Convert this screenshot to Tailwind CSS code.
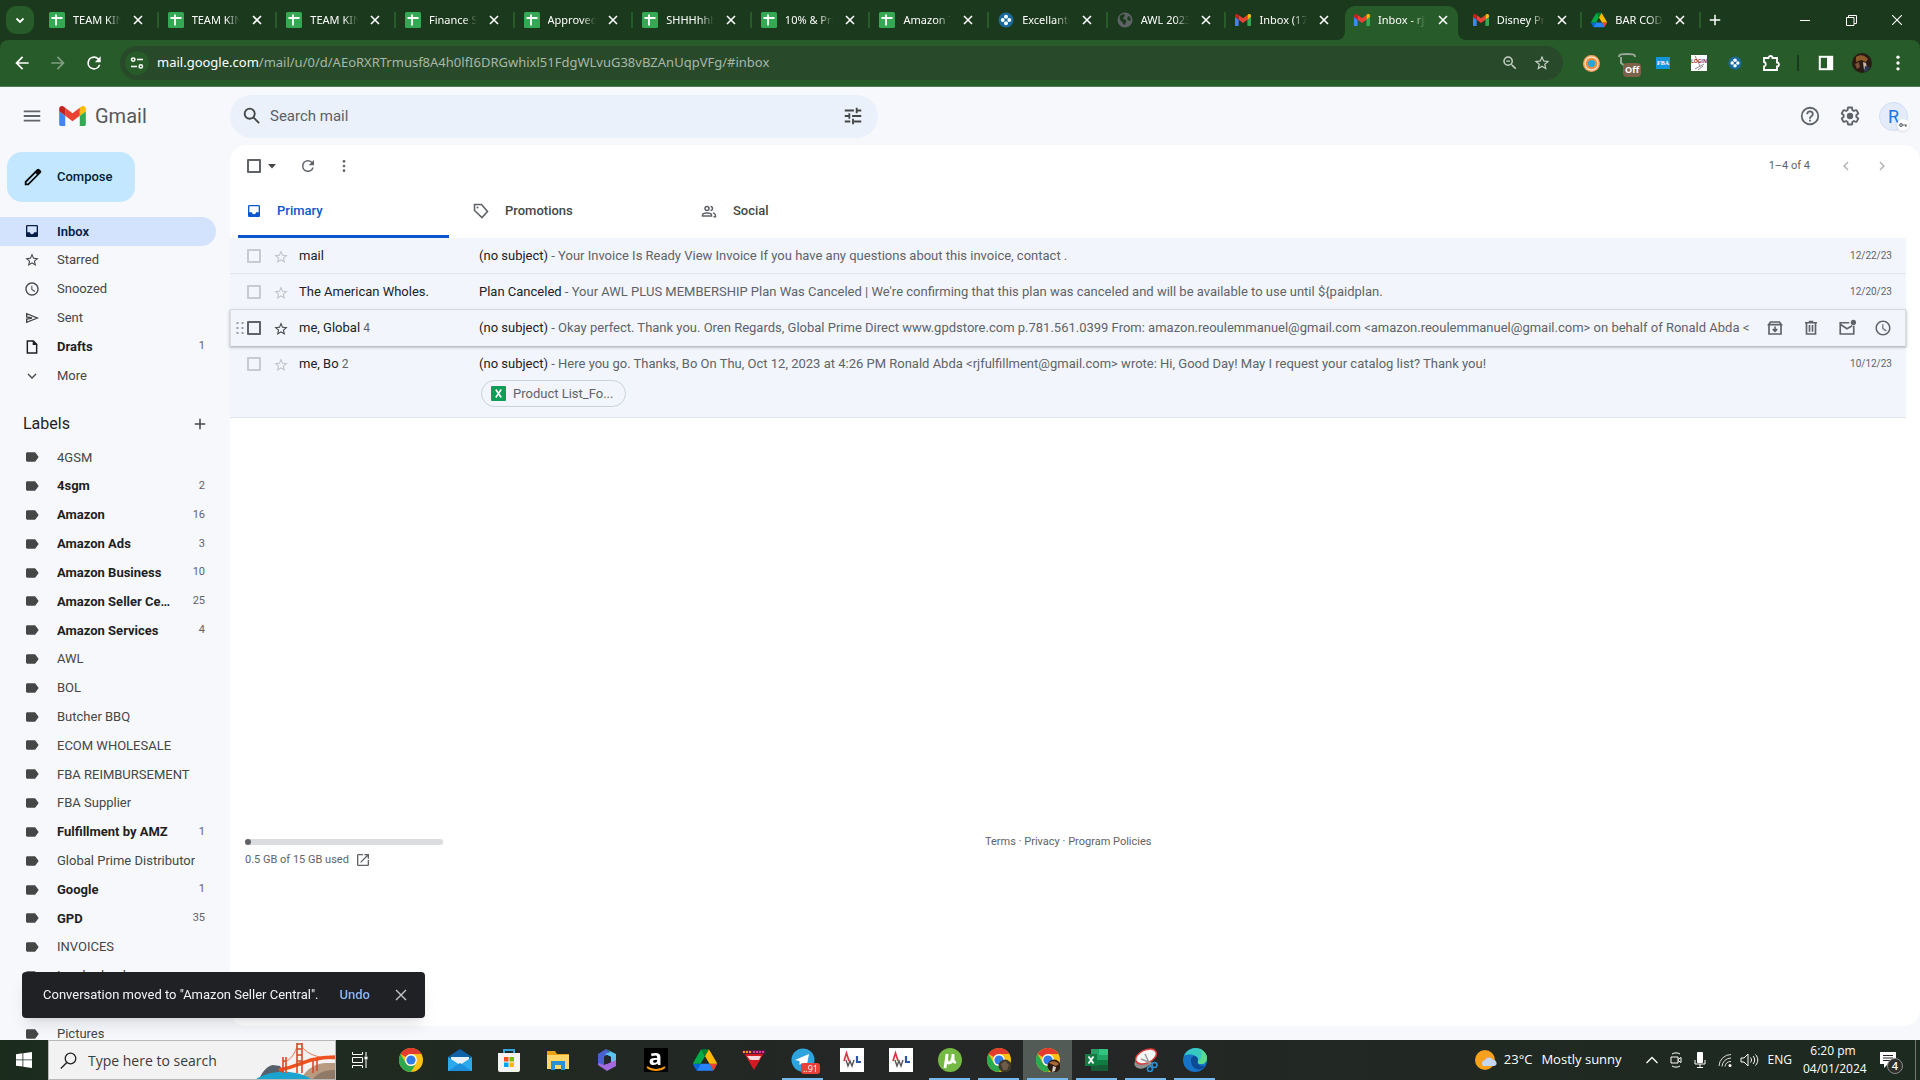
<!DOCTYPE html>
<html lang="en">
<head>
    <meta charset="UTF-8" />
    <meta name="viewport" content="width=device-width, initial-scale=1" />
    <title>Inbox - Gmail</title>
    <script src="https://cdn.jsdelivr.net/npm/@tailwindcss/browser@4"></script>
</head>
<body class="flex h-screen flex-col overflow-hidden bg-[#f6f8fc] font-['Open_Sans',sans-serif]">
    <!-- Icons used more than once -->
    <svg class="hidden">
        <symbol id="i-close" viewBox="0 0 12 12"><path d="M2 2l8 8M10 2l-8 8" stroke="currentColor" stroke-width="1.6" fill="none" /></symbol>
        <symbol id="i-sheets" viewBox="0 0 16 16"><rect width="16" height="16" rx="1.5" fill="#34a853" /><path d="M2.5 6h11M7 2.5v11" stroke="#fff" stroke-width="1.8" /></symbol>
        <symbol id="i-gmail" viewBox="52 42 88 66">
            <path fill="#4285f4" d="M58 108h14V74L52 59v43c0 3.32 2.69 6 6 6" />
            <path fill="#34a853" d="M120 108h14c3.32 0 6-2.69 6-6V59l-20 15" />
            <path fill="#fbbc04" d="M120 48v26l20-15v-8c0-7.42-8.47-11.65-14.4-7.2" />
            <path fill="#ea4335" d="M72 74V48l24 18 24-18v26L96 92" />
            <path fill="#c5221f" d="M52 51v8l20 15V48l-5.6-4.2c-5.94-4.45-14.4-.22-14.4 7.2" />
        </symbol>
        <symbol id="i-drive" viewBox="0 0 87.3 78">
            <path d="m6.6 66.85 3.85 6.65c.8 1.4 1.95 2.5 3.3 3.3l13.75-23.8h-27.5c0 1.55.4 3.1 1.2 4.5z" fill="#0066da" />
            <path d="m43.65 25-13.75-23.8c-1.35.8-2.5 1.9-3.3 3.3l-25.4 44a9.06 9.06 0 0 0-1.2 4.5h27.5z" fill="#00ac47" />
            <path d="m73.55 76.8c1.35-.8 2.5-1.9 3.3-3.3l1.6-2.75 7.65-13.25c.8-1.4 1.2-2.95 1.2-4.5h-27.5l5.85 11.5z" fill="#ea4335" />
            <path d="m43.65 25 13.75-23.8c-1.35-.8-2.9-1.2-4.5-1.2h-18.5c-1.6 0-3.15.45-4.5 1.2z" fill="#00832d" />
            <path d="m59.8 53h-32.3l-13.75 23.8c1.35.8 2.9 1.2 4.5 1.2h50.8c1.6 0 3.15-.45 4.5-1.2z" fill="#2684fc" />
            <path d="m73.4 26.5-12.7-22c-.8-1.4-1.95-2.5-3.3-3.3l-13.75 23.8 16.15 28h27.45c0-1.55-.4-3.1-1.2-4.5z" fill="#ffba00" />
        </symbol>
        <symbol id="i-clover" viewBox="0 0 16 16"><circle cx="8" cy="8" r="7.5" fill="#1b6a9c" /><g fill="#fff"><circle cx="8" cy="4.8" r="2" /><circle cx="8" cy="11.2" r="2" /><circle cx="4.8" cy="8" r="2" /><circle cx="11.2" cy="8" r="2" /></g><rect x="6.8" y="6.8" width="2.4" height="2.4" fill="#1b6a9c" /></symbol>
        <symbol id="i-globe" viewBox="0 0 16 16"><circle cx="8" cy="8" r="7.5" fill="#5f6368" /><path d="M3 4c2-2 4-2 5-1 0 2-2 2-2 4l3 1c1 2-1 3-1 5-2 0-2-3-4-4-1-1-2-3-1-5zM11 4l2 1 1 3-2 1-2-2z" fill="#1b3a1c" /></symbol>
        <symbol id="i-star" viewBox="0 0 24 24"><path fill="currentColor" d="M22 9.24l-7.19-.62L12 2 9.19 8.63 2 9.24l5.46 4.73L5.82 21 12 17.27 18.18 21l-1.63-7.03L22 9.24zM12 15.4l-3.76 2.27 1-4.28-3.32-2.88 4.38-.38L12 6.1l1.71 4.04 4.38.38-3.32 2.88 1 4.28L12 15.4z" /></symbol>
        <symbol id="i-inbox" viewBox="0 0 24 24"><path fill="currentColor" d="M19 3H5c-1.100 0-2 .9-2 2v14c0 1.100.9 2 2 2h14c1.100 0 2-.9 2-2V5c0-1.100-.9-2-2-2zm0 11h-4c0 1.660-1.350 3-3 3s-3-1.340-3-3H5V5h14v9z" /></symbol>
        <symbol id="i-clock" viewBox="0 0 24 24"><path fill="currentColor" d="M12 2C6.500 2 2 6.500 2 12s4.500 10 10 10 10-4.500 10-10S17.500 2 12 2zm0 18c-4.410 0-8-3.590-8-8s3.590-8 8-8 8 3.590 8 8-3.590 8-8 8zm.5-13H11v6l4.750 3.500 1-1.400-4.250-2.850V7z" /></symbol>
        <symbol id="i-label" viewBox="0 0 24 24"><path fill="currentColor" d="M17.630 5.840C17.270 5.330 16.670 5 16 5L5 5.010C3.900 5.010 3 5.900 3 7v10c0 1.100.9 1.990 2 1.990L16 19c.67 0 1.270-.33 1.630-.84L22 12l-4.370-6.160z" /></symbol>
        <symbol id="i-dots" viewBox="0 0 24 24"><g fill="currentColor"><circle cx="12" cy="5" r="2" /><circle cx="12" cy="12" r="2" /><circle cx="12" cy="19" r="2" /></g></symbol>
        <symbol id="i-reload" viewBox="0 0 24 24"><path fill="currentColor" d="M17.650 6.350A7.960 7.960 0 0 0 12 4a8 8 0 1 0 7.730 10h-2.080A6 6 0 1 1 12 6c1.660 0 3.140.69 4.220 1.780L13 11h7V4l-2.350 2.350z" /></symbol>
        <symbol id="i-plus" viewBox="0 0 24 24"><path fill="currentColor" d="M19 13h-6v6h-2v-6H5v-2h6V5h2v6h6v2z" /></symbol>
        <symbol id="i-chrome" viewBox="0 0 24 24"><circle cx="12" cy="12" r="12" fill="#fbc116" /><path d="M1.600 6A12 12 0 0 1 22.400 6H12a6 6 0 0 0-5.200 3z" fill="#e33b2e" /><path d="M1.600 6A12 12 0 0 0 12 24l5.200-9a6 6 0 0 1-10.400 0z" fill="#2da94f" /><circle cx="12" cy="12" r="5.900" fill="#fff" /><circle cx="12" cy="12" r="4.600" fill="#2f7de9" /></symbol>
        <symbol id="i-awl" viewBox="0 0 24 24"><rect width="24" height="24" fill="#fff" /><path d="M4 13l2.500-8L9 13" fill="none" stroke="#d9363e" stroke-width="1.700" /><path d="M6 12l2 6 2-5 2 5 2-6" fill="none" stroke="#555" stroke-width="1.400" /><path d="M17 8v6h4" fill="none" stroke="#2a56a5" stroke-width="2.200" /></symbol>
    </svg>

    <!-- Tab strip -->
    <header class="flex h-10 shrink-0 items-center bg-[#1b391c] pl-[6px] text-white">
        <button aria-label="Search tabs" class="flex size-7 shrink-0 items-center justify-center rounded-[10px] bg-[#275b29]">
            <svg class="size-3" viewBox="0 0 12 12"><path d="M2.500 4.500L6 8l3.500-3.500" stroke="#fff" stroke-width="1.800" fill="none" /></svg>
        </button>
        <div id="tabs" class="ml-[6px] flex h-full min-w-0 flex-1"></div>
        <button aria-label="New tab" class="flex size-7 items-center justify-center"><svg class="size-[18px]"><use href="#i-plus" /></svg></button>
        <div class="ml-[53px] flex h-full">
            <button aria-label="Minimize" class="flex w-[46px] items-center justify-center"><svg class="size-[10px]" viewBox="0 0 10 10"><path d="M0 5.500h10" stroke="#fff" /></svg></button>
            <button aria-label="Restore" class="flex w-[46px] items-center justify-center"><svg class="size-[11px]" viewBox="0 0 11 11"><path d="M.5 2.500h7.500v8H.5zM2.500 2.500v-2h8v8H8" stroke="#fff" fill="none" /></svg></button>
            <button aria-label="Close" class="flex w-[46px] items-center justify-center"><svg class="size-[10px]" viewBox="0 0 10 10"><path d="M0 0l10 10M10 0L0 10" stroke="#fff" stroke-width="1.100" /></svg></button>
        </div>
    </header>

    <!-- Address bar -->
    <div class="shrink-0 bg-[#1b391c]">
        <div class="flex h-[47px] items-center rounded-t-lg border-b border-[#527c54] bg-[#275b29] pr-3 pl-3 text-white">
            <button aria-label="Back" class="flex w-5 justify-center"><svg class="size-5" viewBox="0 0 24 24"><path fill="currentColor" d="M20 11H7.830l5.590-5.590L12 4l-8 8 8 8 1.410-1.410L7.830 13H20v-2z" /></svg></button>
            <button aria-label="Forward" class="ml-4 flex w-5 justify-center text-[#7f9f80]"><svg class="size-5" viewBox="0 0 24 24"><path fill="currentColor" d="M12 4l-1.410 1.410L16.170 11H4v2h12.170l-5.580 5.590L12 20l8-8-8-8z" /></svg></button>
            <button aria-label="Reload" class="ml-4 flex w-5 justify-center"><svg class="size-5"><use href="#i-reload" /></svg></button>
            <div class="relative ml-4 flex h-[34px] flex-1 items-center rounded-full bg-[#284a2a] pr-3 pl-[5px]">
                <button aria-label="Site information" class="flex size-6 items-center justify-center rounded-full bg-[#275b29]">
                    <svg class="size-[14px]" viewBox="0 0 14 14"><g fill="none" stroke="#fff" stroke-width="1.500"><circle cx="3.200" cy="3.600" r="1.700" /><path d="M7 3.600h6M1 10.400h6" /><circle cx="10.800" cy="10.400" r="1.700" /></g></svg>
                </button>
                <a href="#inbox" class="ml-2 flex-1 truncate font-['Noto_Sans',sans-serif] text-[13px] text-[#a9b7a9]"><span class="text-white">mail.google.com</span>/mail/u/0/d/AEoRXRTrmusf8A4h0lfI6DRGwhixl51FdgWLvuG38vBZAnUqpVFg/#inbox</a>
                <button aria-label="Zoom" class="text-[#c3cfc3]"><svg class="size-[18px]" viewBox="0 0 24 24"><path fill="currentColor" d="M15.500 14h-.79l-.28-.27A6.470 6.470 0 0 0 16 9.500 6.500 6.500 0 1 0 9.500 16c1.610 0 3.090-.59 4.230-1.570l.27.28v.79l5 4.990L20.490 19l-4.990-5zm-6 0C7.010 14 5 11.990 5 9.500S7.010 5 9.500 5 14 7.010 14 9.500 11.990 14 9.500 14zM7 8.700h5v1.500H7z" /></svg></button>
                <button aria-label="Bookmark" class="ml-[14px] text-[#c3cfc3]"><svg class="size-[18px]"><use href="#i-star" /></svg></button>
            </div>
            <div class="ml-[18px] flex items-center">
                <button aria-label="Extension" class="flex w-5 justify-center"><svg class="size-[17px]" viewBox="0 0 16 16"><circle cx="8" cy="8" r="8" fill="#f4a261" /><circle cx="8" cy="8" r="6" fill="none" stroke="#fff0dc" stroke-width="1" /><circle cx="8" cy="8" r="5.400" fill="#f08c3c" /><circle cx="8" cy="8" r="3.300" fill="#20a8e0" /></svg></button>
                <button class="relative ml-4 flex h-6 w-5 justify-center"><svg class="size-[18px]" viewBox="0 0 18 18"><path d="M1 6c0-3 3-3 8-3s8 0 8 3M3 6v6l4 3" stroke="#9aa89a" stroke-width="2" fill="none" /></svg><span class="absolute top-3 left-[6px] rounded-[4px] bg-[#7d6148] px-[2px] text-[9px] leading-[14px] font-bold">Off</span></button>
                <button class="ml-4 flex w-5 justify-center"><span class="bg-[#1296db] px-[1px] font-['Liberation_Serif',serif] text-[6px] leading-[12px] font-bold">FBA</span></button>
                <button class="ml-4 flex w-5 justify-center"><span class="relative flex size-4 justify-center overflow-hidden bg-white"><svg class="absolute size-4" viewBox="0 0 16 16"><path d="M4 1l5 10M4 14l9-5M7 15l5-4" stroke="#8b8b8b" fill="none" /></svg><span class="relative text-[5px] leading-[13px] font-bold text-[#a03030]">LOGIN</span></span></button>
                <button aria-label="Clover" class="ml-4 flex w-5 justify-center"><svg class="size-[14px]"><use href="#i-clover" /></svg></button>
                <button aria-label="Extensions" class="ml-4 flex w-5 justify-center"><svg class="size-[18px]" viewBox="0 0 18 18"><path d="M2 4h4.500a2 2 0 0 1 4 0H15v4.500a2 2 0 0 1 0 4V16H2v-3.500a2.300 2.300 0 0 0 0-4.500z" fill="none" stroke="#fff" stroke-width="1.800" /></svg></button>
                <span class="ml-4 h-4 w-[2px] bg-[#1b391c]"></span>
                <button aria-label="Side panel" class="ml-[17px] flex w-5 justify-center"><svg class="size-4" viewBox="0 0 16 16"><rect x="1.800" y="1.800" width="12.400" height="12.400" fill="none" stroke="#fff" stroke-width="2" /><path d="M9 1h6v14H9z" fill="#fff" /></svg></button>
                <button aria-label="Profile" class="ml-4 flex w-5 justify-center"><svg class="size-5" viewBox="0 0 20 20"><circle cx="10" cy="10" r="10" fill="#2a1c14" /><path d="M4 4c4-3 9-2 12 2l-2 3-5-2-5 2z" fill="#8b5a2b" /><path d="M3 11l4-2 1 5-3 2z" fill="#7a5138" /><path d="M11 9l3 1 1 5-3 2z" fill="#c9b8ae" /><path d="M13 13l5 1-3 4-3 1z" fill="#2b3a57" /></svg></button>
                <button aria-label="Menu" class="ml-4 flex w-5 justify-center"><svg class="size-5"><use href="#i-dots" /></svg></button>
            </div>
        </div>
    </div>

    <!-- Gmail -->
    <div class="flex min-h-0 flex-1 flex-col font-[Roboto,sans-serif] text-[13px] text-[#444746]">
        <div class="flex h-[58px] shrink-0 items-center pr-3">
            <div class="flex w-[230px] shrink-0 items-center">
                <button aria-label="Main menu" class="ml-[21px]"><svg class="size-[22px]" viewBox="0 0 24 24"><path fill="#5f6368" d="M3 18h18v-2H3v2zm0-5h18v-2H3v2zm0-7v2h18V6H3z" /></svg></button>
                <a href="#inbox" class="ml-4 flex items-center"><svg class="h-5 w-[27px]"><use href="#i-gmail" /></svg><span class="ml-[9px] text-[20px] text-[#55595d]">Gmail</span></a>
            </div>
            <form class="flex h-[43px] w-[648px] items-center rounded-full bg-[#eaf1fb] pr-[14px] pl-[11px]">
                <button type="button" aria-label="Search" class="flex"><svg class="size-[22px]" viewBox="0 0 24 24"><path fill="#444746" d="M20.490 19l-5.730-5.730C15.530 12.200 16 10.910 16 9.500A6.500 6.500 0 1 0 9.500 16c1.410 0 2.700-.47 3.770-1.240L19 20.490 20.490 19zM5 9.500C5 7.010 7.010 5 9.500 5S14 7.010 14 9.500 11.990 14 9.500 14 5 11.990 5 9.500z" /></svg></button>
                <input type="text" aria-label="Search mail" placeholder="Search mail" class="ml-[7px] flex-1 bg-transparent text-[15px] placeholder-[#5c6066] outline-none" />
                <button type="button" aria-label="Search options" class="flex"><svg class="size-[22px]" viewBox="0 0 24 24"><path fill="#444746" d="M3 17v2h6v-2H3zM3 5v2h10V5H3zm10 16v-2h8v-2h-8v-2h-2v6h2zM7 9v2H3v2h4v2h2V9H7zm14 4v-2H11v2h10zm-6-4h2V7h4V5h-4V3h-2v6z" /></svg></button>
            </form>
            <div class="ml-auto flex items-center text-[#5f6368]">
                <button aria-label="Support"><svg class="size-[22px]" viewBox="0 0 24 24"><path fill="currentColor" d="M11 18h2v-2h-2v2zm1-16a10 10 0 1 0 0 20 10 10 0 0 0 0-20zm0 18c-4.410 0-8-3.590-8-8s3.590-8 8-8 8 3.590 8 8-3.590 8-8 8zm0-14a4 4 0 0 0-4 4h2c0-1.100.9-2 2-2s2 .9 2 2c0 2-3 1.750-3 5h2c0-2.250 3-2.500 3-5a4 4 0 0 0-4-4z" /></svg></button>
                <button aria-label="Settings" class="ml-[18px]"><svg class="size-[22px]" viewBox="0 0 24 24"><path fill="currentColor" d="M13.850 22.250h-3.700c-.74 0-1.360-.54-1.450-1.270l-.27-1.890c-.27-.14-.53-.29-.79-.46l-1.800.72c-.7.26-1.470-.03-1.810-.65L2.200 15.530c-.35-.66-.2-1.440.36-1.880l1.530-1.190c-.01-.15-.02-.3-.02-.46 0-.15.01-.31.02-.46l-1.520-1.190c-.59-.45-.74-1.260-.37-1.880l1.850-3.190c.34-.62 1.110-.9 1.790-.63l1.810.73c.26-.17.52-.32.78-.46l.27-1.910c.09-.7.71-1.250 1.440-1.250h3.700c.74 0 1.360.54 1.450 1.270l.27 1.890c.27.14.53.29.79.46l1.800-.72c.71-.26 1.480.03 1.820.65l1.840 3.180c.36.66.2 1.440-.36 1.880l-1.520 1.190c.01.15.02.3.02.46s-.01.31-.02.46l1.520 1.190c.56.45.72 1.230.37 1.860l-1.860 3.220c-.34.62-1.110.9-1.800.63l-1.800-.72c-.26.17-.52.32-.78.46l-.27 1.910c-.1.680-.72 1.220-1.460 1.220zm-3.230-2h2.760l.37-2.550.53-.22c.44-.18.88-.44 1.340-.78l.45-.34 2.380.96 1.380-2.400-2.030-1.580.07-.56c.03-.26.06-.51.06-.78s-.03-.53-.06-.78l-.07-.56 2.030-1.580-1.390-2.400-2.390.96-.45-.35c-.42-.32-.87-.58-1.330-.77l-.52-.22-.37-2.550h-2.760l-.37 2.550-.53.210c-.44.19-.88.44-1.340.79l-.45.33-2.380-.95-1.390 2.390 2.030 1.580-.07.56a7 7 0 0 0-.06.79c0 .26.02.53.06.78l.07.56-2.030 1.580 1.380 2.400 2.390-.96.45.35c.43.33.86.58 1.330.77l.53.22.38 2.550z" /><circle cx="12" cy="12" r="3.500" fill="currentColor" /></svg></button>
                <button class="relative ml-[18px] flex size-[29px] items-center justify-center rounded-full border border-[#d3dff5] bg-[#e4ecfb] text-[18px] text-[#1a73e8]">R<span class="absolute -right-[2px] -bottom-[1px] flex size-3 items-center justify-center rounded-full bg-white shadow"><svg class="h-[6px] w-2" viewBox="0 0 10 6"><circle cx="2.500" cy="3" r="1.700" stroke="#5f6368" stroke-width="1.400" fill="none" /><path d="M4.500 3H10M8.500 3v2.500" stroke="#5f6368" stroke-width="1.400" /></svg></span></button>
            </div>
        </div>

        <div class="flex min-h-0 flex-1">
            <!-- Sidebar -->
            <aside class="w-[230px] shrink-0 overflow-hidden">
                <button class="mt-[7px] ml-[7px] flex h-[50px] w-32 items-center rounded-[15px] bg-[#c2e7ff] pl-[15px] text-[#001d35]">
                    <svg class="size-[22px]" viewBox="0 0 24 24"><path fill="#0b0b0b" d="M20.410 4.940l-1.350-1.350c-.78-.78-2.050-.78-2.830 0L3 16.820V21h4.180L20.410 7.770c.79-.78.79-2.050 0-2.830zm-14 14.120L5 19v-1.360l9.820-9.820 1.410 1.410-9.820 9.830z" /></svg>
                    <span class="ml-[13px] font-medium">Compose</span>
                </button>
                <nav id="folders" class="mt-[15px] grid h-[173px] auto-rows-fr"></nav>
                <div class="mt-[23px] flex h-[22px] items-center pr-[21px] pl-[23px] text-[16px] text-[#1f1f1f]">
                    <h2 class="flex-1">Labels</h2>
                    <button aria-label="Create new label" class="text-[#444746]"><svg class="size-[18px]"><use href="#i-plus" /></svg></button>
                </div>
                <nav id="labels" class="mt-2 grid h-[605px] auto-rows-fr"></nav>
            </aside>

            <!-- Mail list -->
            <main class="mb-[14px] flex min-w-0 flex-1 flex-col rounded-2xl bg-white">
                <div class="flex h-[42px] shrink-0 items-center pr-[29px] pl-[17px] text-[#5f6368]">
                    <input type="checkbox" aria-label="Select all" class="size-[14px] appearance-none rounded-[1px] border-2 border-[#5f6368]" />
                    <button aria-label="Select" class="ml-[7px]"><svg class="h-[5px] w-2" viewBox="0 0 8 5"><path d="M0 0h8L4 4.500z" fill="#444746" /></svg></button>
                    <button aria-label="Refresh" class="ml-[23px]"><svg class="size-[18px]"><use href="#i-reload" /></svg></button>
                    <button aria-label="More" class="ml-[19px]"><svg class="size-[16px]"><use href="#i-dots" /></svg></button>
                    <span class="ml-auto text-[11px]">1–4 of 4</span>
                    <button aria-label="Newer" class="ml-[27px] text-[#b4b6b9]"><svg class="size-[18px]" viewBox="0 0 24 24"><path fill="currentColor" d="M15.410 7.410L14 6l-6 6 6 6 1.410-1.410L10.830 12z" /></svg></button>
                    <button aria-label="Older" class="ml-[18px] text-[#b4b6b9]"><svg class="size-[18px]" viewBox="0 0 24 24"><path fill="currentColor" d="M8.590 16.590L10 18l6-6-6-6-1.410 1.410L13.170 12z" /></svg></button>
                </div>
                <div class="flex h-[51px] shrink-0 pl-2 font-medium">
                    <button class="mr-4 flex w-[211px] items-center border-b-[3px] border-[#0b57d0] pl-2 text-[#0b57d0]"><svg class="size-4"><use href="#i-inbox" /></svg><span class="ml-[15px]">Primary</span></button>
                    <button class="flex w-[228px] items-center border-b-[3px] border-transparent pl-2"><svg class="size-4" viewBox="0 0 16 16"><path d="M1.500 1.500h7l6 7-5.500 6-7.500-7z" fill="none" stroke="#5f6368" stroke-width="1.600" /><circle cx="4.500" cy="4.500" r="1" fill="#5f6368" /></svg><span class="ml-4">Promotions</span></button>
                    <button class="flex w-[228px] items-center border-b-[3px] border-transparent pl-2"><svg class="size-4" viewBox="0 0 16 16"><g fill="none" stroke="#5f6368" stroke-width="1.500"><circle cx="6" cy="5.500" r="2" /><path d="M1.500 13v-1c0-1.500 2.500-2 4.500-2s4.500.5 4.500 2v1zM9.500 3.500a2 2 0 0 1 0 4M12 10c2 .5 2.500 1 2.500 3.700h-2" /></g></svg><span class="ml-4">Social</span></button>
                </div>
                <div class="pr-[14px]">
                    <table class="w-full table-fixed border-collapse">
                        <colgroup><col class="w-[43px]" /><col class="w-[26px]" /><col class="w-[180px]" /><col /><col class="w-[158px]" /></colgroup>
                        <tbody id="mail"></tbody>
                    </table>
                </div>
                <footer class="mt-[420px] flex items-start pl-[15px] text-[11px] leading-4 text-[#5f6368]">
                    <div class="w-[740px]">
                        <div class="mt-[1px] h-[6px] w-[198px] rounded-full bg-[#dadce0]"><div class="size-[6px] rounded-full bg-[#5f6368]"></div></div>
                        <div class="mt-[7px] flex items-center"><span>0.5 GB of 15 GB used</span><a href="#storage" aria-label="Manage storage" class="ml-[6px]"><svg class="size-4" viewBox="0 0 24 24"><path fill="currentColor" d="M19 19H5V5h7V3H5a2 2 0 0 0-2 2v14a2 2 0 0 0 2 2h14c1.100 0 2-.9 2-2v-7h-2v7zM14 3v2h3.590l-9.830 9.830 1.410 1.410L19 6.410V10h2V3h-7z" /></svg></a></div>
                    </div>
                    <p class="-mt-1"><a href="#terms">Terms</a> · <a href="#privacy">Privacy</a> · <a href="#policies">Program Policies</a></p>
                </footer>
            </main>
        </div>
    </div>

    <!-- Snackbar -->
    <div role="status" class="fixed bottom-[62px] left-[22px] flex h-[46px] items-center rounded-[4px] bg-[#202124] pr-[17px] pl-[21px] font-[Roboto,sans-serif] text-[13px] text-[#f1f3f4] shadow-lg">
        <span>Conversation moved to "Amazon Seller Central".</span>
        <button class="ml-[21px] font-medium text-[#8ab4f8]">Undo</button>
        <button aria-label="Dismiss" class="ml-[24px] text-[#c4c7c5]"><svg class="size-[14px]" viewBox="0 0 14 14"><path d="M2 2l10 10M12 2L2 12" stroke="currentColor" stroke-width="1.400" /></svg></button>
    </div>

    <!-- Taskbar -->
    <footer class="flex h-10 shrink-0 items-stretch bg-linear-to-r from-[#1b2c1d] via-[#252626] to-[#1c2a20] text-white">
        <button aria-label="Start" class="flex w-12 items-center justify-center"><svg class="size-4" viewBox="0 0 16 16"><path fill="#fff" d="M0 2.200l6.500-.9v6.200H0zM7.300 1.200L16 0v7.500H7.300zM0 8.300h6.500v6.300L0 13.700zM7.300 8.300H16V16l-8.700-1.200z" /></svg></button>
        <label class="relative flex w-72 items-center border border-[#b8b8b8] bg-[#f2f2f2] pl-[11px]">
            <svg class="size-[17px]" viewBox="0 0 17 17"><circle cx="10.500" cy="6.500" r="5.300" fill="none" stroke="#222" stroke-width="1.300" /><path d="M6.800 10.500L.8 16.500" stroke="#222" stroke-width="1.400" /></svg>
            <input type="text" aria-label="Search Windows" placeholder="Type here to search" class="ml-[11px] w-40 bg-transparent text-[14px] placeholder-[#3b3b3b] outline-none" />
            <svg class="absolute right-0 bottom-0 h-[38px] w-20" viewBox="0 0 80 38">
                <path d="M4 38c4-8 8-13 14-14l7 1 6 9 4 4z" fill="#56606e" />
                <path d="M8 38c4-5 10-6 16-4l5 4z" fill="#8e8473" />
                <path d="M46 38c5-10 14-15 24-16h10v16z" fill="#b79a80" /><path d="M58 38c6-7 12-9 22-9v9z" fill="#8f7967" />
                <path d="M1 38c10-6 22-8 33-7 10 1 18 4 22 7z" fill="#1ba4cf" />
                <path d="M24 29c16-3 22-7 32-10 8-2 16-3 24-3" stroke="#f0501c" stroke-width="3.500" fill="none" />
                <path d="M42 32V2M47 32V2M42 3h5M42 8h5M42 14h5M42 20h5M28 32V16M31 32V16M28 20h3M58 32V20M62 30V19" stroke="#d9482a" stroke-width="1.600" fill="none" />
                <path d="M46 3c3 9 15 14 34 15M43 3c-3 9-7 17-15 18" stroke="#e2572b" stroke-width=".8" fill="none" />
            </svg>
        </label>
        <button aria-label="Task view" class="flex w-[50px] items-center justify-center pr-[2px]"><svg class="size-4" viewBox="0 0 16 16"><path d="M.5 0v2.500h10V0M.5 5.500h10v5H.5zM.5 16v-2.500h10V16M14 0v4M14 8v8" stroke="#fff" fill="none" /><path d="M12.500 4.500h3v3h-3z" fill="#fff" /></svg></button>
        <div id="apps" class="flex"></div>
        <div class="ml-auto flex items-center">
            <button class="flex items-center text-[14px]"><svg class="h-[22px] w-6" viewBox="0 0 24 22"><circle cx="11" cy="11" r="10" fill="#f5a01f" /><path d="M9 17a3.500 3.500 0 0 1 2-6 4.500 4.500 0 0 1 8 0 3 3 0 0 1 1 6z" fill="#c3d6f5" /></svg><span class="ml-[6px] text-[13px]">23°C</span><span class="ml-[9px] text-[13px]">Mostly sunny</span></button>
            <button aria-label="Hidden icons" class="ml-6"><svg class="size-3" viewBox="0 0 12 12"><path d="M.5 9L6 3.500 11.500 9" stroke="#fff" stroke-width="1.300" fill="none" /></svg></button>
            <button aria-label="Meet now" class="ml-3"><svg class="h-4 w-3" viewBox="0 0 12 16"><path d="M1 5h7v6H1zM8 7.500l3-2v5l-3-2M2 2c2-1.500 6-1.500 8 0M2 14c2 1.500 6 1.500 8 0" stroke="#fff" fill="none" /></svg></button>
            <button aria-label="Microphone" class="ml-3"><svg class="h-4 w-3" viewBox="0 0 12 16"><rect x="3" width="6" height="11" rx="1" fill="#fff" /><path d="M1 8v4h10V8M6 12v4M3 15.500h6" stroke="#fff" fill="none" /></svg></button>
            <button aria-label="Network" class="ml-3"><svg class="size-[14px]" viewBox="0 0 14 14"><g stroke="#ddd" fill="none"><path d="M1 13A12 12 0 0 1 13 1.500M4 13.500A9 9 0 0 1 13 5M7 13.500a6 6 0 0 1 6-5" /></g><circle cx="12" cy="12.500" r="1.500" fill="#fff" /></svg></button>
            <button aria-label="Volume" class="ml-2"><svg class="h-4 w-5" viewBox="0 0 20 16"><path d="M1 6h3l4-4v12l-4-4H1zM10.500 5.500c1.300 1.500 1.300 3.500 0 5M13 4c2.200 2.500 2.200 5.500 0 8M15.500 2.500c3 3.500 3 7.500 0 11" stroke="#fff" fill="none" /></svg></button>
            <span class="ml-2 text-[12px]">ENG</span>
            <time class="ml-[11px] w-[60px] text-center text-[12px] leading-[18px]">6:20 pm<br />04/01/2024</time>
            <button class="relative ml-[17px] w-[24px]"><svg class="h-4 w-4" viewBox="0 0 16 16"><path d="M0 0h16v12H8l-4 4v-4H0z" fill="#fff" /><path d="M3 3.500h10M3 6h10M3 8.500h7" stroke="#222" /></svg><span class="absolute right-[1px] -bottom-[6px] flex size-4 items-center justify-center rounded-full border border-[#8a8a8a] bg-[#2c302d] text-[11px] font-semibold">4</span></button>
            <span class="ml-[11px] h-10 border-l border-[#777] pl-1"></span>
        </div>
    </footer>

    <script>
        const tabs = [
            ['i-sheets', 'TEAM KING'], ['i-sheets', 'TEAM KING'], ['i-sheets', 'TEAM KING'], ['i-sheets', 'Finance S'],
            ['i-sheets', 'Approved'], ['i-sheets', 'SHHHhhhh'], ['i-sheets', '10% & Pro'], ['i-sheets', 'Amazon T'],
            ['i-clover', 'Excellante'], ['i-globe', 'AWL 2023'], ['i-gmail', 'Inbox (17)'], ['i-gmail', 'Inbox - rjf'],
            ['i-gmail', 'Disney Pri'], ['i-drive', 'BAR CODE']
        ];
        const active = 11;
        document.getElementById('tabs').innerHTML = tabs.map(([icon, title], i) => `
            <div class="relative flex min-w-0 flex-1 items-center">
                ${i === active ? '<span class="absolute top-[6px] right-[6px] -bottom-px left-0 rounded-t-[10px] bg-[#275b29]"></span><span class="absolute bottom-0 -left-2 size-2 overflow-hidden bg-[#275b29]"><span class="block size-2 rounded-br-lg bg-[#1b391c]"></span></span><span class="absolute right-[-2px] bottom-0 size-2 bg-[#275b29]"><span class="block size-2 rounded-bl-lg bg-[#1b391c]"></span></span>' : ''}
                <svg class="relative ml-[9px] size-4 shrink-0"><use href="#${icon}" /></svg>
                <button class="relative ml-2 w-12 shrink-0 overflow-hidden mask-r-from-70% text-left font-['Noto_Sans',sans-serif] text-[11px] whitespace-nowrap">${title}</button>
                <button aria-label="Close tab" class="relative ml-[11px]"><svg class="size-3"><use href="#i-close" /></svg></button>
                ${i === active || i === active - 1 ? '' : '<span class="absolute top-3 right-0 h-4 w-[2px] bg-[#275b29]"></span>'}
            </div>`).join('');

        const folderIcons = {
            Inbox: '<use href="#i-inbox" />',
            Starred: '<use href="#i-star" />',
            Snoozed: '<use href="#i-clock" />',
            Sent: '<path fill="none" stroke="currentColor" stroke-width="2" d="M4 5.500v5L12 12l-8 1.500v5L20 12z" />',
            Drafts: '<path fill="none" stroke="currentColor" stroke-width="2.200" d="M5 3h9l5 5v13H5z" /><path fill="currentColor" d="M13 2l7 7h-7z" />',
            More: '<path fill="none" stroke="currentColor" stroke-width="2" d="M6 9l6 6 6-6" />'
        };
        const folders = [['Inbox', ''], ['Starred', ''], ['Snoozed', ''], ['Sent', ''], ['Drafts', '1'], ['More', '']];
        document.getElementById('folders').innerHTML = folders.map(([name, count]) => `
            <a href="#${name.toLowerCase()}" class="mr-[14px] flex items-center rounded-r-full pr-[11px] pl-6 ${name === 'Inbox' ? 'bg-[#d3e3fd] font-semibold text-[#041e49]' : ''} ${count ? 'font-bold text-[#1f1f1f]' : ''}">
                <svg class="size-4" viewBox="0 0 24 24">${folderIcons[name]}</svg>
                <span class="ml-[17px] flex-1">${name}</span>
                <span class="text-[11px] font-normal text-[#5f6368]">${count}</span>
            </a>`).join('');

        const labels = [
            ['4GSM'], ['4sgm', 2], ['Amazon', 16], ['Amazon Ads', 3], ['Amazon Business', 10], ['Amazon Seller Central', 25],
            ['Amazon Services', 4], ['AWL'], ['BOL'], ['Butcher BBQ'], ['ECOM WHOLESALE'], ['FBA REIMBURSEMENT'], ['FBA Supplier'],
            ['Fulfillment by AMZ', 1], ['Global Prime Distributor'], ['Google', 1], ['GPD', 35], ['INVOICES'], ['Lamberland'],
            [''], ['Pictures']
        ];
        document.getElementById('labels').innerHTML = labels.map(([name, count]) => `
            <a href="#label" class="mr-[14px] flex items-center pr-[11px] pl-6 ${count ? 'font-bold text-[#1f1f1f]' : ''}">
                <svg class="size-4 shrink-0 text-[#444746]"><use href="#i-label" /></svg>
                <span class="ml-[17px] truncate ${count ? 'w-[118px]' : ''}">${name}</span>
                <span class="ml-auto text-[11px] font-normal text-[#5f6368]">${count || ''}</span>
            </a>`).join('');

        const mail = [
            { from: 'mail', subject: '(no subject)', text: 'Your Invoice Is Ready View Invoice If you have any questions about this invoice, contact .', date: '12/22/23' },
            { from: 'The American Wholes.', subject: 'Plan Canceled', text: "Your AWL PLUS MEMBERSHIP Plan Was Canceled | We're confirming that this plan was canceled and will be available to use until ${paidplan.", date: '12/20/23' },
            { from: 'me, Global', n: 4, hover: true, subject: '(no subject)', text: 'Okay perfect. Thank you. Oren Regards, Global Prime Direct www.gpdstore.com p.781.561.0399 From: amazon.reoulemmanuel@gmail.com &lt;amazon.reoulemmanuel@gmail.com&gt; on behalf of Ronald Abda &lt;' },
            { from: 'me, Bo', n: 2, subject: '(no subject)', text: 'Here you go. Thanks, Bo On Thu, Oct 12, 2023 at 4:26 PM Ronald Abda &lt;rjfulfillment@gmail.com&gt; wrote: Hi, Good Day! May I request your catalog list? Thank you!', date: '10/12/23', file: 'Product List_Fo...' }
        ];
        const actions = `
            <div class="flex items-center justify-end gap-[18px] pr-[14px] text-[#5f6368]">
                <button aria-label="Archive"><svg class="size-[18px]" viewBox="0 0 24 24"><path fill="none" stroke="currentColor" stroke-width="2.200" d="M4 7v13h16V7M3.500 7.500h17L18 4H6zM12 10v6M9 13.500l3 3 3-3" /></svg></button>
                <button aria-label="Delete"><svg class="size-[18px]" viewBox="0 0 24 24"><path fill="none" stroke="currentColor" stroke-width="2.200" d="M4 5h16M9 3.500h6M6 5v15h12V5M10 8v9M14 8v9" /></svg></button>
                <button aria-label="Mark as unread"><svg class="size-[18px]" viewBox="0 0 24 24"><path fill="none" stroke="currentColor" stroke-width="2.200" d="M15 5H3v15h18V9M3 7l9 6 7-4" /><circle cx="20.500" cy="4.500" r="3.500" fill="currentColor" /></svg></button>
                <button aria-label="Snooze"><svg class="size-[18px]"><use href="#i-clock" /></svg></button>
            </div>`;
        document.getElementById('mail').innerHTML = mail.map((m) => `
            <tr class="bg-[#f2f6fc] align-top ${m.file ? 'h-[72px]' : 'h-9'} ${m.hover ? 'relative z-10 shadow-[inset_1px_0_0_#dadce0,inset_-1px_0_0_#dadce0,0_1px_2px_0_rgba(60,64,67,0.3),0_1px_3px_1px_rgba(60,64,67,0.15)]' : 'shadow-[inset_0_-1px_0_#e1e5ec]'}">
                <td class="relative pt-[11px] pl-[17px]">
                    ${m.hover ? '<svg class="absolute top-3 left-[6px] h-3 w-2" viewBox="0 0 8 12"><path d="M1.500 0v12M6.500 0v12" stroke="#9a9da1" stroke-width="2" stroke-dasharray="2 3" /></svg>' : ''}
                    <input type="checkbox" aria-label="Select conversation" class="block size-[14px] appearance-none rounded-[1px] border-2 ${m.hover ? 'border-[#5f6368]' : 'border-[#c7cacf]'}" />
                </td>
                <td class="pt-[11px]"><button aria-label="Star" class="block ${m.hover ? 'text-[#444746]' : 'text-[#c1c4c8]'}"><svg class="size-4"><use href="#i-star" /></svg></button></td>
                <td class="truncate pt-2 leading-5 text-[#202124]">${m.from}${m.n ? ` <span class="text-[12px] text-[#5f6368]">${m.n}</span>` : ''}</td>
                <td class="pt-2 leading-5 whitespace-nowrap text-[#5f6368]">
                    <div><span class="text-[#202124]">${m.subject}</span> - ${m.text}</div>
                    ${m.file ? `<a href="#file" class="mt-[6px] ml-[2px] inline-flex h-[27px] items-center rounded-full border border-[#c9d1dc] pr-3 pl-[9px]"><svg class="size-[15px]" viewBox="0 0 15 15"><rect width="15" height="15" rx="1" fill="#0f9d58" /><path d="M4.800 3.500l5.400 8M10.200 3.500l-5.400 8" stroke="#fff" stroke-width="1.600" /></svg><span class="ml-[7px]">${m.file}</span></a>` : ''}
                </td>
                <td class="${m.hover ? 'pt-[9px]' : 'pt-2 pr-[14px] text-right text-[10px] leading-5 text-[#5f6368]'}">${m.hover ? actions : m.date}</td>
            </tr>`).join('');

        // Windows taskbar apps
        const apps = [
            { svg: '<use href="#i-chrome" />' },
            { svg: '<path d="M0 9l12-8 12 8v14H0z" fill="#0f62a8" /><path d="M3 9h18v8H3z" fill="#e9f2fb" /><path d="M0 9l12 8L24 9v14H0z" fill="#2ba9ec" /><path d="M0 23l12-8 12 8z" fill="#1c8edb" />' },
            { svg: '<path d="M7 6V2h10v4" fill="none" stroke="#2ea7e0" stroke-width="2" /><path d="M1 5h22v17a2 2 0 0 1-2 2H3a2 2 0 0 1-2-2z" fill="#f3f3f3" /><path d="M7 9h4.500v4.500H7z" fill="#f25022" /><path d="M12.500 9H17v4.500h-4.500z" fill="#7fba00" /><path d="M7 14.500h4.500V19H7z" fill="#00a4ef" /><path d="M12.500 14.500H17V19h-4.500z" fill="#ffb900" />' },
            { svg: '<path d="M1 3h8l2 3h12v15H1z" fill="#e8a317" /><path d="M1 7h22v14H1z" fill="#ffd766" /><path d="M5 22v-9h14v9h-4v-5H9v5z" fill="#2b8fd6" />' },
            { svg: '<path d="M11 1L3 6v11l6 3V9l6-4z" fill="#4a5fd0" /><path d="M11 1l10 5v12l-5-3V9l-6-3 5-2z" fill="#5ac4f0" /><path d="M21 12v6l-9 5-9-6 1-2 5 2 7-3z" fill="#a36ae0" /><path d="M9 9l3-2 4 2v5l-4 2-3-2z" fill="#23262a" />' },
            { svg: '<path d="M0 0h24v24H0z" fill="#000" /><path d="M3 19c5 4 13 4 18 0" fill="none" stroke="#f90" stroke-width="1.800" />', text: 'a' },
            { svg: '<use href="#i-drive" />' },
            { svg: '<path d="M2 5h20L12 22z" fill="#d51920" /><path d="M5 8h14l-2 4H8z" fill="#f8d9df" /><path d="M0 2h24v4H0z" fill="#5a1740" /><path d="M1 4h9" stroke="#f0a020" stroke-width="2" stroke-dasharray="2 1" /><path d="M11 4h12" stroke="#e0409a" stroke-width="2" stroke-dasharray="2 1" />' },
            { svg: '<circle cx="12" cy="12" r="11.500" fill="#2ea4dc" /><path d="M4 12l14-6-2.500 13-4.500-4-2.500 2v-4z" fill="#fff" />', badge: '..91', open: true },
            { svg: '<use href="#i-awl" />' },
            { svg: '<use href="#i-awl" />' },
            { svg: '<circle cx="12" cy="12" r="12" fill="#74b943" /><path d="M7 20L9 6c-.5 6-.5 9 2 9s4-4 4-9c0 6 0 9 3 8" fill="none" stroke="#fff" stroke-width="2.800" />', open: true },
            { svg: '<use href="#i-chrome" /><circle cx="18" cy="18" r="6.500" fill="#3f3a2c" /><path d="M14 16l4-3 4 4-2 5h-4z" fill="#6e5b4a" />', open: true },
            { svg: '<use href="#i-chrome" /><circle cx="18" cy="18" r="6.500" fill="#2c1d14" /><path d="M13 15c3-3 8-2 10 1l-3 2z" fill="#a86b36" /><path d="M17 18l3 1-1 4-3 1z" fill="#d9cbc1" />', open: true, current: true },
            { svg: '<path d="M6 1h17v22H6z" fill="#21a366" /><path d="M14 1h9v6h-9z" fill="#33c481" /><path d="M6 12h17v11H6z" fill="#107c41" /><path d="M6 17h17v6H6z" fill="#185c37" /><path d="M0 6h12v12H0z" fill="#107c41" /><path d="M3.500 8.500l5 7M8.500 8.500l-5 7" stroke="#fff" stroke-width="1.800" />', open: true },
            { svg: '<ellipse cx="9" cy="14" rx="9" ry="6" transform="rotate(-25 9 14)" fill="#8f8f8f" /><ellipse cx="12" cy="8.500" rx="11" ry="6.500" transform="rotate(-25 12 8.500)" fill="#f6f6f6" stroke="#d93a3a" stroke-width="1.500" /><path d="M7 11l12 5M11 6l6 13" stroke="#9a9a9a" stroke-width="1.500" /><g fill="none" stroke="#2b8fd6" stroke-width="1.600"><circle cx="20.500" cy="17" r="2.500" /><circle cx="16" cy="21" r="2.500" /></g>', open: true },
            { svg: '<circle cx="12" cy="12" r="12" fill="#1673c8" /><path d="M1 8C4 1 10 0 13 0c6 0 11 5 11 10 0 4-3 6-6 6-4 0-4-2-3-4C15 7 6 5 1 8z" fill="#36c9c0" /><path d="M17 1c4 2 7 5 7 9 0 4-3 6-6 6-3 0-3-1-2.500-3C19 11 20 5 17 1z" fill="#5bdc8c" /><path d="M8 12c0-3 2-4 4-4 2 1 3 2 3 4-2 4 3 7 7 6-4 6-14 4-14-6z" fill="#0c4a94" />', open: true }
        ];
        document.getElementById('apps').innerHTML = apps.map((a) => `
            <button class="relative flex w-[49px] items-center justify-center ${a.current ? 'bg-[#535b57]' : ''}">
                <svg class="size-6" viewBox="0 0 24 24">${a.svg}</svg>
                ${a.text ? `<span class="absolute top-[3px] text-[22px] leading-[26px] font-bold">${a.text}</span>` : ''}
                ${a.badge ? `<span class="absolute top-[23px] left-[23px] rounded-[3px] bg-[#e8403a] px-[2px] text-[9px] leading-[11px]">${a.badge}</span>` : ''}
                ${a.open ? '<span class="absolute inset-x-1 bottom-0 h-[2px] bg-[#76b9ed]"></span>' : ''}
            </button>`).join('');
    </script>
</body>
</html>
